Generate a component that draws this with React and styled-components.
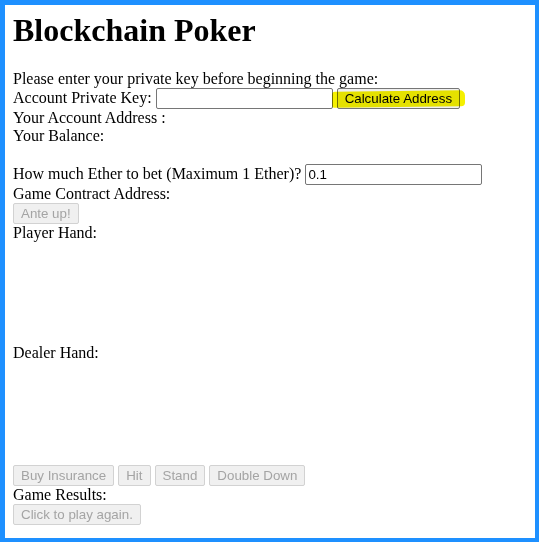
import React from 'react'
import styled, { createGlobalStyle, css } from 'styled-components'

const GlobalStyle = createGlobalStyle`
    html, body {
        margin: 0;
        padding: 0;
        background: #fff;
    }
`

const Frame = styled.div`
    box-sizing: border-box;
    height: 542px;
    border: solid #1e90ff;
    border-width: 5px 4px 4px 5px;
    padding: 7px 8px 0;
    font-family: "Liberation Serif", "Times New Roman", serif;
    font-size: 16px;
    color: #000;
    overflow: hidden;
`

const Title = styled.h1`
    font-size: 32px;
    font-weight: bold;
    margin: 0 0 21.44px;
`

const Line = styled.div`
    min-height: 18px;
`

const Blank = styled.div`
    height: 19px;
`

const HandArea = styled.div`
    height: ${p => p.$height}px;
`

const ButtonRow = styled.div`
    display: flex;
    gap: 4px;
`

const Button = styled.button`
    font-family: "Liberation Sans", Arial, sans-serif;
    font-size: 13.33px;
    padding: 2px 7px;
    margin: 0;
    border-radius: 2px;
    border: 1px solid #767676;
    background: #efefef;
    color: #000;
    ${p => p.disabled && css`
        border-color: #d2d2d2;
        background: #f0f0f0;
        color: #a4a4a4;
    `}
`

const Highlight = styled.span`
    position: relative;
    display: inline-block;
    &::after {
        content: '';
        position: absolute;
        left: -5px;
        right: -5px;
        top: 3px;
        bottom: 2px;
        background: rgb(245, 240, 0);
        border-radius: 3px 5px 4px 2px;
        transform: rotate(-0.6deg);
        mix-blend-mode: multiply;
        pointer-events: none;
    }
`

const Input = styled.input`
    box-sizing: border-box;
    width: 177px;
    height: 21px;
    margin: 0;
    padding: 1px 2px;
    border: 1px solid #767676;
    border-radius: 2px;
    font-family: "Liberation Sans", Arial, sans-serif;
    font-size: 13.33px;
    color: #000;
    background: #fff;
`

const App = () => {
    return (
        <>
            <GlobalStyle />
            <Frame>
                <Title>Blockchain Poker</Title>
                <Line>Please enter your private key before beginning the game:</Line>
                <Line>
                    Account Private Key: <Input type="text" />{' '}
                    <Highlight><Button>Calculate Address</Button></Highlight>
                </Line>
                <Line>Your Account Address :</Line>
                <Line>Your Balance:</Line>
                <Blank />
                <Line>
                    How much Ether to bet (Maximum 1 Ether)? <Input type="text" defaultValue="0.1" />
                </Line>
                <Line>Game Contract Address:</Line>
                <Line><Button disabled>Ante up!</Button></Line>
                <Line>Player Hand:</Line>
                <HandArea $height={102} />
                <Line>Dealer Hand:</Line>
                <HandArea $height={103} />
                <ButtonRow>
                    <Button disabled>Buy Insurance</Button>
                    <Button disabled>Hit</Button>
                    <Button disabled>Stand</Button>
                    <Button disabled>Double Down</Button>
                </ButtonRow>
                <Line>Game Results:</Line>
                <Line><Button disabled>Click to play again.</Button></Line>
            </Frame>
        </>
    )
}

export default App
